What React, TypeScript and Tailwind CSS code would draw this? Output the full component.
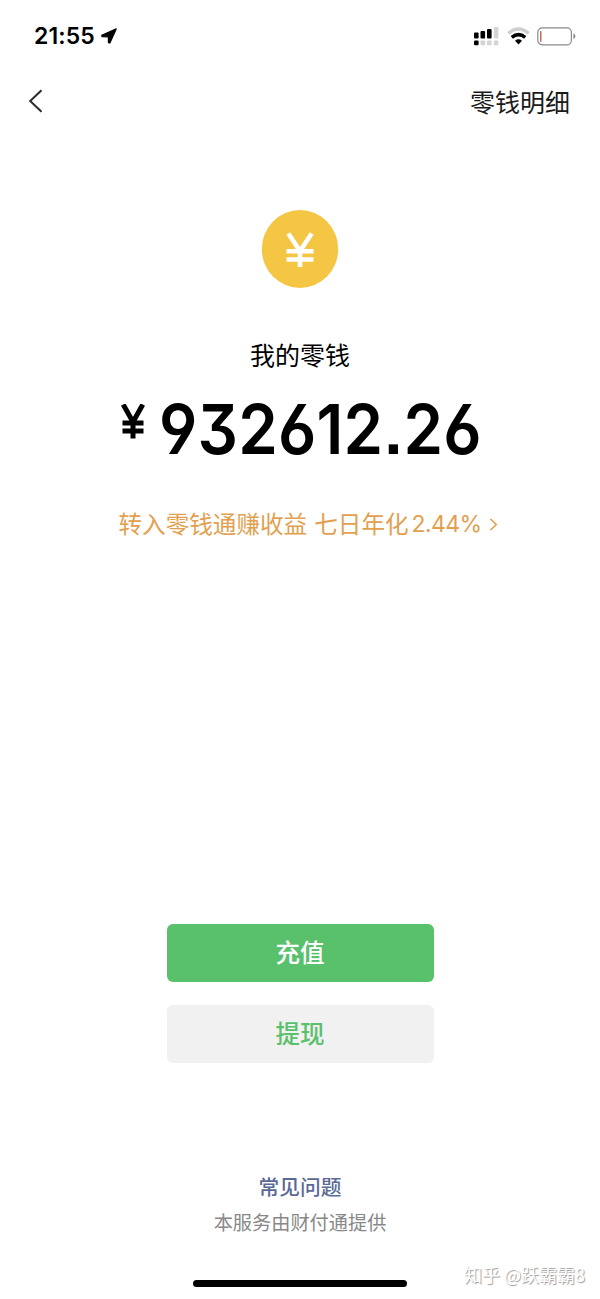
function StatusBar() {
  return (
    <div className="flex h-[72px] items-center justify-between pl-[34px] pr-[24px]">
      <div className="flex items-center gap-[6px]">
        <span className="font-['Inter',sans-serif] text-[23px] leading-[28px] font-semibold tracking-[0.1px]">21:55</span>
        <svg width="16" height="16" viewBox="0 0 16 16">
          <path d="M15.2 0.9 L8.9 15 L7.4 14.6 L7.4 8.8 L1 8.6 L0.8 7.3 Z" fill="#000" stroke="#000" strokeWidth="1.2" strokeLinejoin="round" />
        </svg>
      </div>
      <div className="flex items-center">
        <svg width="25" height="20" viewBox="0 0 25 20">
          <rect x="0" y="6.5" width="4.6" height="6" rx="1" />
          <rect x="6.5" y="5" width="4.6" height="7.5" rx="1" />
          <rect x="13" y="3" width="4.6" height="9.5" rx="1" />
          <rect x="19.8" y="1" width="4.6" height="11.5" rx="1" fill="#d4d4d4" />
          <rect x="0" y="14.5" width="4.6" height="4.8" rx="1" />
          <rect x="6.5" y="14.5" width="4.6" height="4.8" rx="1" fill="#d4d4d4" />
          <rect x="13" y="14.5" width="4.6" height="4.8" rx="1" fill="#d4d4d4" />
          <rect x="19.8" y="14.5" width="4.6" height="4.8" rx="1" fill="#d4d4d4" />
        </svg>
        <svg className="ml-[8px]" width="23" height="18" viewBox="0 0 23 18" fill="none">
          <path d="M1.3 6.4 Q11.5 -2.4 21.7 6.4" stroke="#cfcfcf" strokeWidth="3.4" />
          <path d="M4.8 10.4 Q11.5 4.8 18.2 10.4" stroke="#000" strokeWidth="3.6" />
          <path d="M8 13.7 Q11.5 11 15 13.7 L11.5 17.4 Z" fill="#000" />
        </svg>
        <svg className="ml-[7px]" width="39" height="19" viewBox="0 0 39 19" fill="none">
          <rect x="0.8" y="0.8" width="33.6" height="17" rx="4.5" stroke="#8a8a8a" strokeWidth="1.2" />
          <rect x="3" y="4" width="1.5" height="11" rx="0.7" fill="#c06a55" />
          <path d="M36.4 6.6 Q38.4 7.4 38.4 9.3 Q38.4 11.2 36.4 12 Z" fill="#8a8a8a" />
        </svg>
      </div>
    </div>
  );
}

function NavBar() {
  return (
    <div className="flex h-[58px] items-center justify-between pl-[28px] pr-[30px]">
      <svg width="15" height="24" viewBox="0 0 15 24" fill="none">
        <path d="M13.5 1.2 L2.2 12 L13.5 22.8" stroke="#2b2b2b" strokeWidth="2" />
      </svg>
      <span className="text-[25px] leading-[36px] text-[#1a1a1a]">零钱明细</span>
    </div>
  );
}

function CoinIcon() {
  return (
    <svg className="mt-[79px]" width="78" height="80" viewBox="0 0 78 80" fill="none">
      <ellipse cx="39" cy="40" rx="38.2" ry="39" fill="#f5c544" />
      <path d="M27.3 24.5 L39 42 L50.7 24.5 M39 41 V58 M25.5 42.2 H52.5 M25.5 50.5 H52.5" stroke="#fff" strokeWidth="4.6" />
    </svg>
  );
}

function Balance() {
  return (
    <div className="mt-[17px] flex h-[80px] w-[360px] items-start">
      <svg className="mt-[15px] shrink-0" width="26" height="36" viewBox="0 0 26 36" fill="none">
        <path d="M3.2 0.5 L13 18 L22.8 0.5 M13 17 V34.5 M2.5 19 H23.5 M2.5 27 H23.5" stroke="#000" strokeWidth="5" />
      </svg>
      <span className="ml-[13px] origin-left scale-x-[0.92] font-['Inter',sans-serif] text-[69px] leading-[80px] font-semibold tracking-[0.2px] whitespace-nowrap [font-feature-settings:'cv03','cv04','cv09','ss07']">
        932612.26
      </span>
    </div>
  );
}

export default function App() {
  return (
    <div className="relative flex h-[1299px] w-[600px] flex-col overflow-hidden bg-white font-['Noto_Sans_CJK_SC',sans-serif] text-black">
      <StatusBar />
      <NavBar />

      <main className="flex flex-col items-center">
        <CoinIcon />
        <p className="mt-[47px] text-[25px] leading-[36px]">我的零钱</p>
        <Balance />
        <a className="mt-[37px] ml-[16px] flex h-[36px] items-center text-[23.6px] whitespace-nowrap text-[#e2a04f]">
          <span>转入零钱通赚收益</span>
          <span className="ml-[7px]">七日年化</span>
          <span className="ml-[3px] font-['Inter',sans-serif] text-[23px] tracking-[-0.6px]">2.44%</span>
          <svg className="ml-[7px]" width="9" height="13" viewBox="0 0 9 13" fill="none">
            <path d="M1.5 1 L7.2 6.5 L1.5 12" stroke="#e2a04f" strokeWidth="1.6" />
          </svg>
        </a>
      </main>

      <div className="mt-[381.5px] flex flex-col items-center gap-[23px] text-[24.5px] font-medium">
        <button className="h-[58px] w-[267px] rounded-[6px] bg-[#59c06c] text-white">充值</button>
        <button className="h-[58px] w-[267px] rounded-[6px] bg-[#f1f1f1] text-[#59c06c]">提现</button>
      </div>

      <footer className="mt-[107.5px] flex flex-col items-center">
        <a className="text-[20.7px] leading-[32px] font-medium text-[#5a6a95]">常见问题</a>
        <p className="mt-[5px] text-[19.2px] leading-[30px] text-[#888888]">本服务由财付通提供</p>
        <div className="mt-[43px] h-[7px] w-[214px] rounded-full bg-black" />
      </footer>

      {/* watermark */}
      <span className="absolute right-[15px] bottom-[12px] text-[18px] leading-[26px] whitespace-nowrap text-white [text-shadow:1px_1px_1px_#999]">
        知乎 @跃霸霸8
      </span>
    </div>
  );
}
